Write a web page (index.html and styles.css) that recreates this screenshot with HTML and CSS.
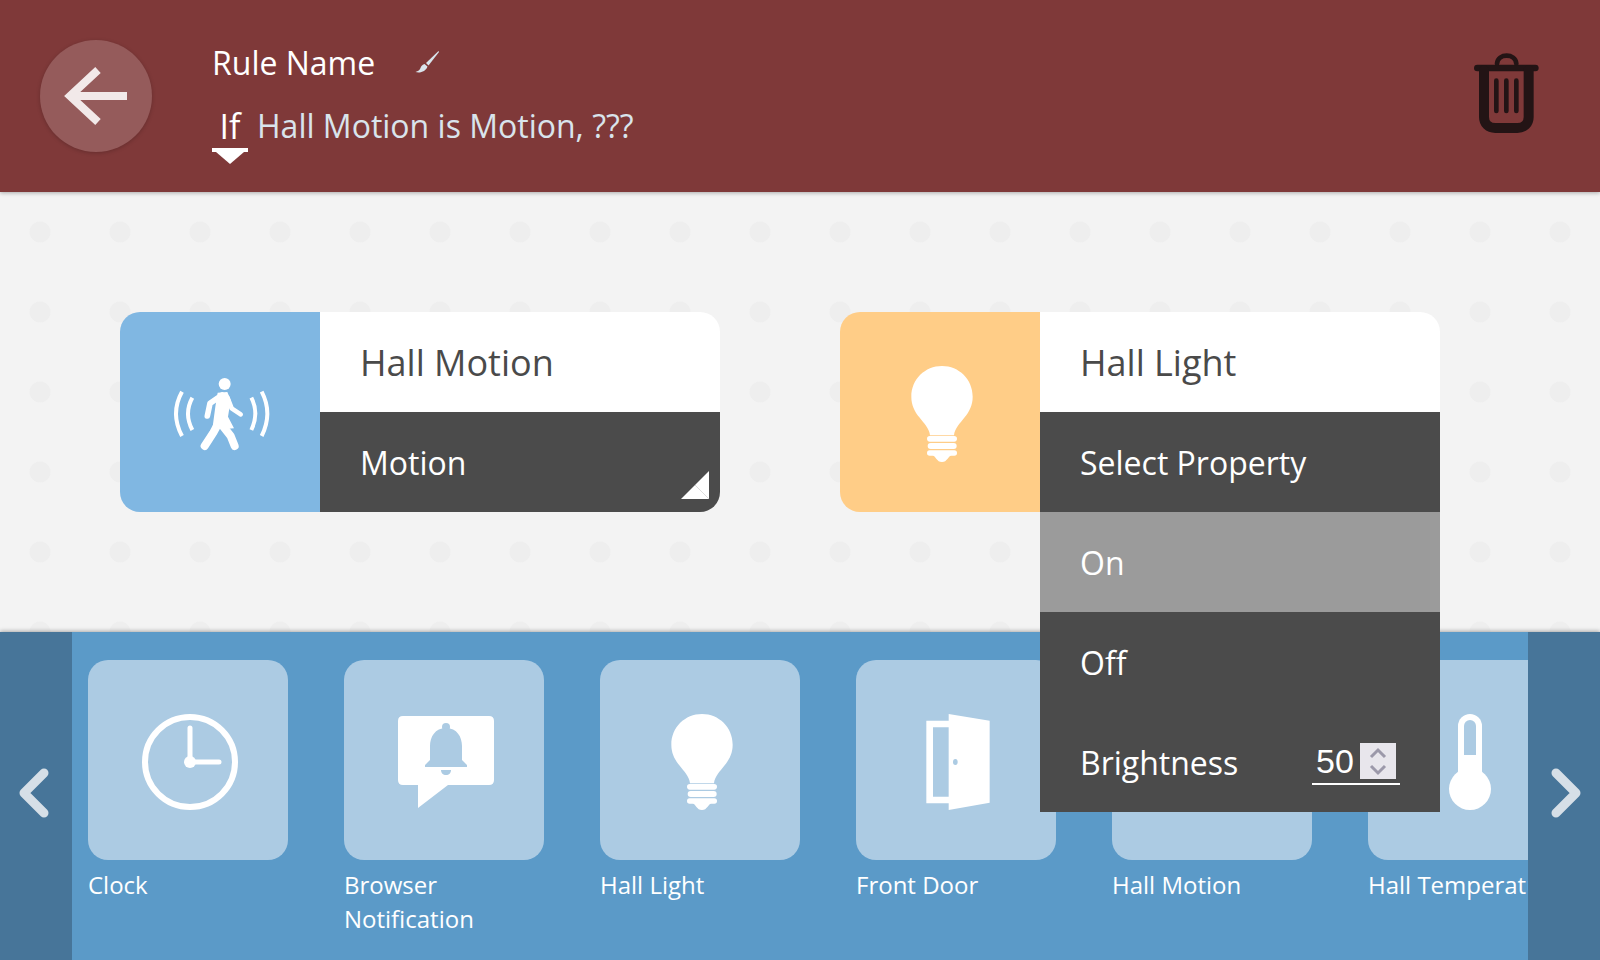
FILE: index.html
```html
<!DOCTYPE html>
<html lang="en">
<head>
    <meta charset="UTF-8">
    <title>Rule Name</title>
    <link rel="stylesheet" href="styles.css">
</head>
<body>
    <svg class="defs" aria-hidden="true">
        <symbol id="icon-bulb" viewBox="30 30 600 600">
            <path d="M336 192C285 192 244 232 244 284C244 310 254 328 268 346C282 364 298 380 300 400L372 400C374 380 390 364 404 346C418 328 428 310 428 284C428 232 387 192 336 192Z"/>
            <rect x="291" y="402" width="90" height="17" rx="8.5"/>
            <rect x="293" y="423" width="87" height="18" rx="9"/>
            <rect x="291" y="445" width="90" height="16" rx="8"/>
            <path d="M306 458C318 462 320 480 336 480C352 480 354 462 366 458Z"/>
        </symbol>
        <symbol id="icon-motion" viewBox="-90 -144 600 600">
            <circle cx="224" cy="72" r="18"/>
            <path class="limb" stroke-width="17" d="M216 105L180 130L172 168"/>
            <path class="limb" stroke-width="14" d="M232 112L245 145L272 163"/>
            <path d="M203 98L232 96L242 120L234 170L252 205L218 208L188 200L196 140Z"/>
            <path class="limb" stroke-width="24" d="M205 190L190 218L164 258"/>
            <path class="limb" stroke-width="24" d="M212 190L242 228L254 258"/>
            <path class="wave" d="M96 95Q60 160 96 228"/>
            <path class="wave" d="M127 113Q101 160 127 210"/>
            <path class="wave" d="M304 113Q328 160 304 210"/>
            <path class="wave" d="M335 95Q369 160 335 228"/>
        </symbol>
    </svg>

    <header class="rule-header">
        <button class="back-btn">
            <svg viewBox="0 0 112 112" width="112" height="112">
                <path class="back-arrow" d="M58 30L30 56L58 82M30 56L87 56"/>
            </svg>
        </button>
        <div class="rule-title">
            <div class="rule-name">
                <span>Rule Name</span>
                <svg class="edit-icon" viewBox="0 0 24 22" width="24" height="22">
                    <path d="M23.5 0L11 12L13.5 14.5L24 1Z"/>
                    <path d="M9.5 13C7 14 6 15 5.5 17C5 19 3 20 .5 21C5 22.500 11 20.500 12.500 15.500Z"/>
                </svg>
            </div>
            <div class="rule-summary">
                <span class="rule-if">If</span>
                <span>Hall Motion is Motion, ???</span>
            </div>
        </div>
        <svg class="trash-icon" viewBox="222 98 195 240" width="65" height="80">
            <path class="trash-line" stroke-width="20" d="M232 143L406 143"/>
            <path class="trash-line" stroke-width="30" d="M252 150L252 290C252 310 266 323 286 323L352 323C372 323 386 310 386 290L386 150"/>
            <path class="trash-line" stroke-width="14" d="M291 130C294 98 346 98 349 130"/>
            <path class="trash-line" stroke-width="14" d="M289 181L289 272M319 181L319 272M349 181L349 272"/>
        </svg>
    </header>

    <main class="canvas">
        <div class="rule-card">
            <div class="card-icon motion">
                <svg width="200" height="200"><use href="#icon-motion"/></svg>
            </div>
            <div class="card-body">
                <div class="card-title">Hall Motion</div>
                <div class="card-prop closed">
                    Motion
                    <svg class="resize-mark" viewBox="0 0 28 28" width="28" height="28">
                        <path class="mark-fill" d="M28 0L28 28L0 28Z"/>
                        <path class="mark-line" d="M14 14L28 28"/>
                    </svg>
                </div>
            </div>
        </div>

        <div class="rule-card">
            <div class="card-icon light">
                <svg width="200" height="200"><use href="#icon-bulb"/></svg>
            </div>
            <div class="card-body">
                <div class="card-title">Hall Light</div>
                <div class="card-prop">Select Property</div>
                <div class="prop-menu">
                    <div class="prop-item selected">On</div>
                    <div class="prop-item">Off</div>
                    <div class="prop-item">
                        Brightness
                        <div class="level">
                            <span class="level-value">50</span>
                            <span class="spinner">
                                <svg viewBox="0 0 36 36" width="36" height="36">
                                    <path d="M11 14L18 7L25 14M11 23L18 30L25 23"/>
                                </svg>
                            </span>
                        </div>
                    </div>
                </div>
            </div>
        </div>
    </main>

    <section class="palette">
        <div class="palette-arrow">
            <svg viewBox="0 0 72 328" width="72" height="328"><path d="M44 141L24 161L44 181"/></svg>
        </div>
        <div class="palette-track">
            <div class="thing">
                <div class="thing-tile">
                    <svg viewBox="0 0 200 200" width="200" height="200">
                        <circle class="outline" stroke-width="6" cx="102" cy="102" r="45"/>
                        <path class="outline" stroke-width="5" d="M102 68L102 102L131 102"/>
                        <circle cx="102" cy="102" r="6"/>
                    </svg>
                </div>
                <div class="thing-name">Clock</div>
            </div>
            <div class="thing">
                <div class="thing-tile">
                    <svg viewBox="0 0 200 200" width="200" height="200">
                        <path d="M59 56L145 56Q150 56 150 61L150 120Q150 125 145 125L104 125L74 148L74 125L59 125Q54 125 54 120L54 61Q54 56 59 56Z"/>
                        <circle class="cut" cx="102" cy="67" r="4"/>
                        <path class="cut" d="M102 68C91 68 86 77 86 86L86 100L81 105L81 107L123 107L123 105L118 100L118 86C118 77 113 68 102 68Z"/>
                        <path class="cut" d="M97 110L107 110C107 113 105 115 102 115C99 115 97 113 97 110Z"/>
                    </svg>
                </div>
                <div class="thing-name">Browser Notification</div>
            </div>
            <div class="thing">
                <div class="thing-tile">
                    <svg width="200" height="200"><use href="#icon-bulb"/></svg>
                </div>
                <div class="thing-name">Hall Light</div>
            </div>
            <div class="thing">
                <div class="thing-tile">
                    <svg viewBox="798 30 600 600" width="200" height="200">
                        <path d="M1009 212L1078 212L1078 232L1029 232L1029 440L1078 440L1078 460L1009 460Z"/>
                        <path d="M1076 192L1199 212L1199 458L1076 480Z"/>
                        <ellipse class="cut" cx="1096" cy="336" rx="7" ry="9"/>
                    </svg>
                </div>
                <div class="thing-name">Front Door</div>
            </div>
            <div class="thing">
                <div class="thing-tile">
                    <svg width="200" height="200"><use href="#icon-motion"/></svg>
                </div>
                <div class="thing-name">Hall Motion</div>
            </div>
            <div class="thing">
                <div class="thing-tile">
                    <svg viewBox="0 0 200 200" width="200" height="200">
                        <rect x="90" y="54" width="24" height="75" rx="12"/>
                        <circle cx="102" cy="129" r="21"/>
                        <path class="cut" d="M96 95L96 66A6 6 0 0 1 108 66L108 95Z"/>
                    </svg>
                </div>
                <div class="thing-name">Hall Temperature</div>
            </div>
        </div>
        <div class="palette-arrow">
            <svg viewBox="0 0 72 328" width="72" height="328"><path d="M28 141L48 161L28 181"/></svg>
        </div>
    </section>
</body>
</html>
```

FILE: styles.css
```css
* {
    box-sizing: border-box;
}
html, body {
    height: 100%;
}
body {
    margin: 0;
    display: flex;
    flex-direction: column;
    overflow: hidden;
    font-family: 'Open Sans', sans-serif;
    background-color: #f3f3f3;
    color: #fff;
}
.defs {
    display: none;
}

/* header */
.rule-header {
    position: relative;
    z-index: 3;
    flex: none;
    height: 192px;
    display: flex;
    align-items: flex-start;
    padding: 40px 61px 0 40px;
    background-color: #7f3939;
    box-shadow: 0 1px 4px rgba(0,0,0,0.3);
}
.back-btn {
    width: 112px;
    height: 112px;
    padding: 0;
    border: none;
    border-radius: 50%;
    background-color: #955b5b;
    box-shadow: 0 1px 4px rgba(0,0,0,0.2);
}
.back-btn svg {
    display: block;
}
.back-arrow {
    fill: none;
    stroke: #f2e9e9;
    stroke-width: 8;
}
.rule-title {
    flex: 1;
    margin-left: 60px;
}
.rule-name {
    display: flex;
    align-items: center;
    height: 44px;
    font-size: 32px;
}
.edit-icon {
    margin-left: 40px;
    fill: #d9e4ec;
}
.rule-summary {
    display: flex;
    margin-top: 20px;
    font-size: 32px;
    line-height: 44px;
    color: #d9e4ec;
}
.rule-if {
    position: relative;
    width: 36px;
    margin-right: 9px;
    text-align: center;
    font-size: 34px;
    color: #fff;
}
.rule-if::before {
    content: "";
    position: absolute;
    left: 0;
    right: 0;
    top: 44px;
    height: 4px;
    background-color: #fff;
}
.rule-if::after {
    content: "";
    position: absolute;
    left: 4px;
    top: 48px;
    border-left: 14px solid transparent;
    border-right: 14px solid transparent;
    border-top: 12px solid #fff;
}
.trash-icon {
    margin-top: 13px;
}
.trash-line {
    fill: none;
    stroke: #231415;
    stroke-linecap: round;
}

/* canvas */
.canvas {
    flex: 1;
    display: flex;
    gap: 120px;
    padding: 120px 0 0 120px;
    background-image: radial-gradient(circle at center, #eee 10px, transparent 11px);
    background-size: 80px 80px;
}
.rule-card {
    position: relative;
    display: flex;
    width: 600px;
    height: 200px;
}
.card-icon {
    flex: none;
    width: 200px;
    height: 200px;
    border-radius: 20px 0 0 20px;
    fill: #fff;
}
.card-icon svg {
    display: block;
}
.card-icon.motion {
    background-color: #80b7e2;
}
.card-icon.light {
    background-color: #ffcd87;
}
.limb, .wave {
    fill: none;
    stroke: #fff;
}
.limb {
    stroke-linecap: round;
    stroke-linejoin: round;
}
.wave {
    stroke-width: 12;
}
.card-body {
    position: relative;
    flex: 1;
}
.card-title {
    height: 100px;
    padding-left: 40px;
    line-height: 102px;
    font-size: 36px;
    color: #4a4a4a;
    background-color: #fff;
    border-radius: 0 20px 0 0;
}
.card-prop {
    position: relative;
    height: 100px;
    padding-left: 40px;
    line-height: 102px;
    font-size: 32px;
    background-color: #4b4b4b;
}
.card-prop.closed {
    border-radius: 0 0 20px 0;
}
.resize-mark {
    position: absolute;
    right: 11px;
    bottom: 13px;
}
.mark-fill {
    fill: #fff;
}
.mark-line {
    fill: none;
    stroke: #bbb;
    stroke-width: 0.5;
}

/* property menu, hangs over the palette */
.prop-menu {
    position: absolute;
    z-index: 5;
    left: 0;
    right: 0;
    top: 200px;
    background-color: #4b4b4b;
}
.prop-item {
    display: flex;
    align-items: center;
    justify-content: space-between;
    height: 100px;
    padding: 0 40px;
    font-size: 32px;
}
.prop-item.selected {
    background-color: #9b9b9b;
}
.level {
    display: flex;
    width: 88px;
    margin-top: 4px;
    padding: 0 4px 4px 4px;
    align-items: center;
    justify-content: space-between;
    border-bottom: 2px solid #fff;
}
.level-value {
    font-family: 'Liberation Sans', sans-serif;
    font-size: 34px;
    line-height: 36px;
}
.spinner {
    width: 36px;
    height: 36px;
    background-color: #e8e6ec;
}
.spinner svg {
    display: block;
    fill: none;
    stroke: #9c99aa;
    stroke-width: 3;
}

/* palette */
.palette {
    position: relative;
    flex: none;
    display: flex;
    height: 328px;
    background-color: #5b9ac8;
    box-shadow: 0 -1px 4px rgba(0,0,0,0.3);
}
.palette-arrow {
    flex: none;
    width: 72px;
    background-color: #477599;
}
.palette-arrow svg {
    display: block;
    fill: none;
    stroke: #d6dfe7;
    stroke-width: 9;
    stroke-linecap: round;
    stroke-linejoin: round;
}
.palette-track {
    flex: 1;
    display: flex;
    gap: 56px;
    padding: 28px 0 0 16px;
    overflow: hidden;
}
.thing {
    flex: none;
    width: 200px;
}
.thing-tile {
    width: 200px;
    height: 200px;
    border-radius: 20px;
    background-color: #accbe3;
    fill: #fff;
}
.thing-tile svg {
    display: block;
}
.outline {
    fill: none;
    stroke: #fff;
    stroke-linecap: round;
}
.cut {
    fill: #accbe3;
}
.thing-name {
    margin-top: 8px;
    font-size: 24px;
    line-height: 34px;
}
```
